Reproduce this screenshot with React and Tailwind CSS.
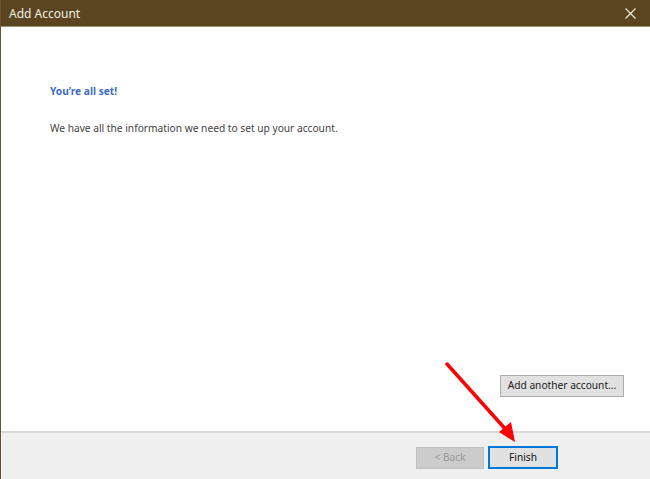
import React from "react";

const App = () => {
  return (
    <div
      className="w-[650px] h-[479px] flex flex-col bg-white border-l border-[#6b5630] overflow-hidden relative"
      style={{ fontFamily: '"Noto Sans", "Open Sans", sans-serif' }}
    >
      {/* Title bar */}
      <div className="h-[27px] shrink-0 bg-[#5a4520] border-b border-[#a39675] flex items-center justify-between pl-[8px] pr-[14px]">
        <span className="text-[12px] text-[#f2ede4] mt-[2px]">Add Account</span>
        <svg width="11" height="11" viewBox="0 0 11 11">
          <path d="M0.5 0.5 L10.5 10.5 M10.5 0.5 L0.5 10.5" stroke="#efe9dd" strokeWidth="1.2" />
        </svg>
      </div>

      {/* Body */}
      <div className="flex-1 flex flex-col px-[49px] pt-[57px] relative">
        <h2 className="text-[10.2px] font-bold text-[#3b6cc8]">You’re all set!</h2>
        <p className="text-[10.2px] text-[#444] mt-[22px]">
          We have all the information we need to set up your account.
        </p>
        <div className="flex-1" />
        <div className="flex justify-end -mr-[23px] mb-[34px]">
          <button className="w-[124px] h-[22px] bg-[#e1e1e1] border border-[#adadad] text-[10.2px] text-[#222]">
            Add another account...
          </button>
        </div>
      </div>

      {/* Footer */}
      <div className="h-[48px] shrink-0 bg-[#f0f0f0] border-t-2 border-[#d9d9d9] flex justify-end items-start pt-[14px] pr-[92px] gap-[4px]">
        <button className="w-[68px] h-[22px] bg-[#cccccc] border border-[#bfbfbf] text-[10.2px] text-[#9a9a9a]">
          &lt; Back
        </button>
        <button className="w-[70px] h-[23px] -mt-[1px] bg-[#e1e1e1] border-2 border-[#0078d7] text-[10.2px] text-[#111]">
          Finish
        </button>
      </div>

      {/* Annotation arrow */}
      <svg className="absolute left-0 top-0 pointer-events-none" width="650" height="479">
        <line x1="446" y1="364" x2="507" y2="432" stroke="#ff0000" strokeWidth="3.5" strokeLinecap="round" />
        <polygon points="514,442 498,432 510,422" fill="#ff0000" />
      </svg>
    </div>
  );
};

export default App;
